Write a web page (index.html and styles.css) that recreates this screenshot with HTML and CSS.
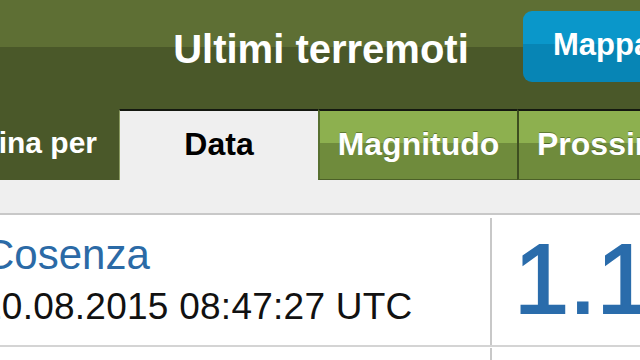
FILE: index.html
```html
<!DOCTYPE html>
<html lang="it">
<head>
<meta charset="utf-8">
<title>Ultimi terremoti</title>
<link rel="stylesheet" href="styles.css">
</head>
<body>
<div class="screen">
  <header class="header">
    <h1 class="title">Ultimi terremoti</h1>
    <button class="map-btn">Mappa</button>
  </header>
  <nav class="tabs">
    <div class="sort-label"><span>Ordina per</span></div>
    <div class="tab tab-active">Data</div>
    <div class="tab tab-green">Magnitudo</div>
    <div class="tab tab-green tab-dark-sep">Prossimità</div>
  </nav>
  <div class="gap"></div>
  <ul class="list">
    <li class="row">
      <div class="info">
        <div class="place">Cosenza</div>
        <div class="time">10.08.2015 08:47:27 UTC</div>
      </div>
      <div class="mag">1.1</div>
    </li>
    <li class="row row-next">
      <div class="info"></div>
      <div class="mag"></div>
    </li>
  </ul>
</div>
</body>
</html>
```
FILE: styles.css
```css
html, body {
  margin: 0;
  padding: 0;
}
body {
  width: 640px;
  height: 360px;
  overflow: hidden;
  font-family: "Liberation Sans", Arial, Helvetica, sans-serif;
  background: #ffffff;
}
.screen {
  width: 640px;
  height: 360px;
  overflow: hidden;
  display: flex;
  flex-direction: column;
}
.header {
  height: 109px;
  flex: none;
  display: grid;
  grid-template-columns: 640px;
  background: linear-gradient(#5e6f34 0, #5e6f34 47px, #4a5829 47px, #4a5829 100%);
}
.title {
  grid-area: 1 / 1;
  justify-self: center;
  align-self: start;
  margin: 29px 0 0 2px;
  font-size: 40px;
  line-height: 40px;
  font-weight: bold;
  color: #ffffff;
  white-space: nowrap;
}
.map-btn {
  grid-area: 1 / 1;
  justify-self: start;
  align-self: start;
  margin: 11px 0 0 523px;
  width: 150px;
  height: 71px;
  box-sizing: border-box;
  border: 0;
  border-radius: 9px;
  padding: 18px 0 0 30px;
  display: flex;
  align-items: flex-start;
  font-family: inherit;
  font-size: 31px;
  line-height: 31px;
  font-weight: bold;
  color: #ffffff;
  background: linear-gradient(#0a97ca 0, #0a97ca 33px, #0785b5 33px, #0785b5 100%);
}
.tabs {
  height: 71px;
  flex: none;
  display: flex;
  overflow: hidden;
  white-space: nowrap;
  background: #4a5829;
}
.sort-label {
  width: 119px;
  flex: none;
  display: flex;
  justify-content: flex-end;
  align-items: center;
  overflow: hidden;
  padding-right: 22px;
  box-sizing: border-box;
  padding-bottom: 3px;
  font-size: 30px;
  line-height: 32px;
  font-weight: bold;
  color: #ffffff;
}
.sort-label span {
  flex: none;
}
.tab {
  flex: none;
  width: 199px;
  box-sizing: border-box;
  border-top: 2px solid #141810;
  display: flex;
  justify-content: center;
  align-items: center;
  padding-bottom: 3px;
  font-size: 32px;
  line-height: 32px;
  font-weight: bold;
}
.tab-active {
  background: #efefef;
  color: #000000;
  border-left: 1px solid #8a9a60;
}
.tab-green {
  color: #ffffff;
  border-left: 2px solid #587030;
  border-bottom: 1px solid #4c6028;
  text-shadow: 0 -1px 0 rgba(40, 55, 15, 0.45);
  background: linear-gradient(#8db04f 0, #8db04f 32px, #6f8b3c 32px, #6f8b3c 100%);
}
.tab-dark-sep {
  border-left-color: #3e4e20;
  justify-content: flex-start;
  padding-left: 18px;
}
.gap {
  height: 33px;
  flex: none;
  background: #efefef;
  border-bottom: 2px solid #c8c8c8;
}
.list {
  list-style: none;
  margin: 0;
  padding: 0;
  flex: 1;
}
.row {
  display: grid;
  grid-template-columns: 490px 1fr;
  border-bottom: 2px solid #d4d4d4;
  height: 130px;
}
.info {
  margin-left: -16px;
  padding-top: 19px;
  white-space: nowrap;
}
.place {
  font-size: 42px;
  line-height: 42px;
  color: #2b6aa6;
}
.time {
  margin-top: 12px;
  margin-left: -3px;
  font-size: 37px;
  line-height: 37px;
  letter-spacing: 0.25px;
  color: #111111;
}
.mag {
  margin-top: 3px;
  border-left: 2px solid #c8c8c8;
  padding: 11px 0 0 22px;
  font-size: 99px;
  line-height: 99px;
  color: #2a6cab;
  -webkit-text-stroke: 2px #2a6cab;
  white-space: nowrap;
  overflow: hidden;
}
.row-next .mag {
  margin-top: 1px;
}
```
